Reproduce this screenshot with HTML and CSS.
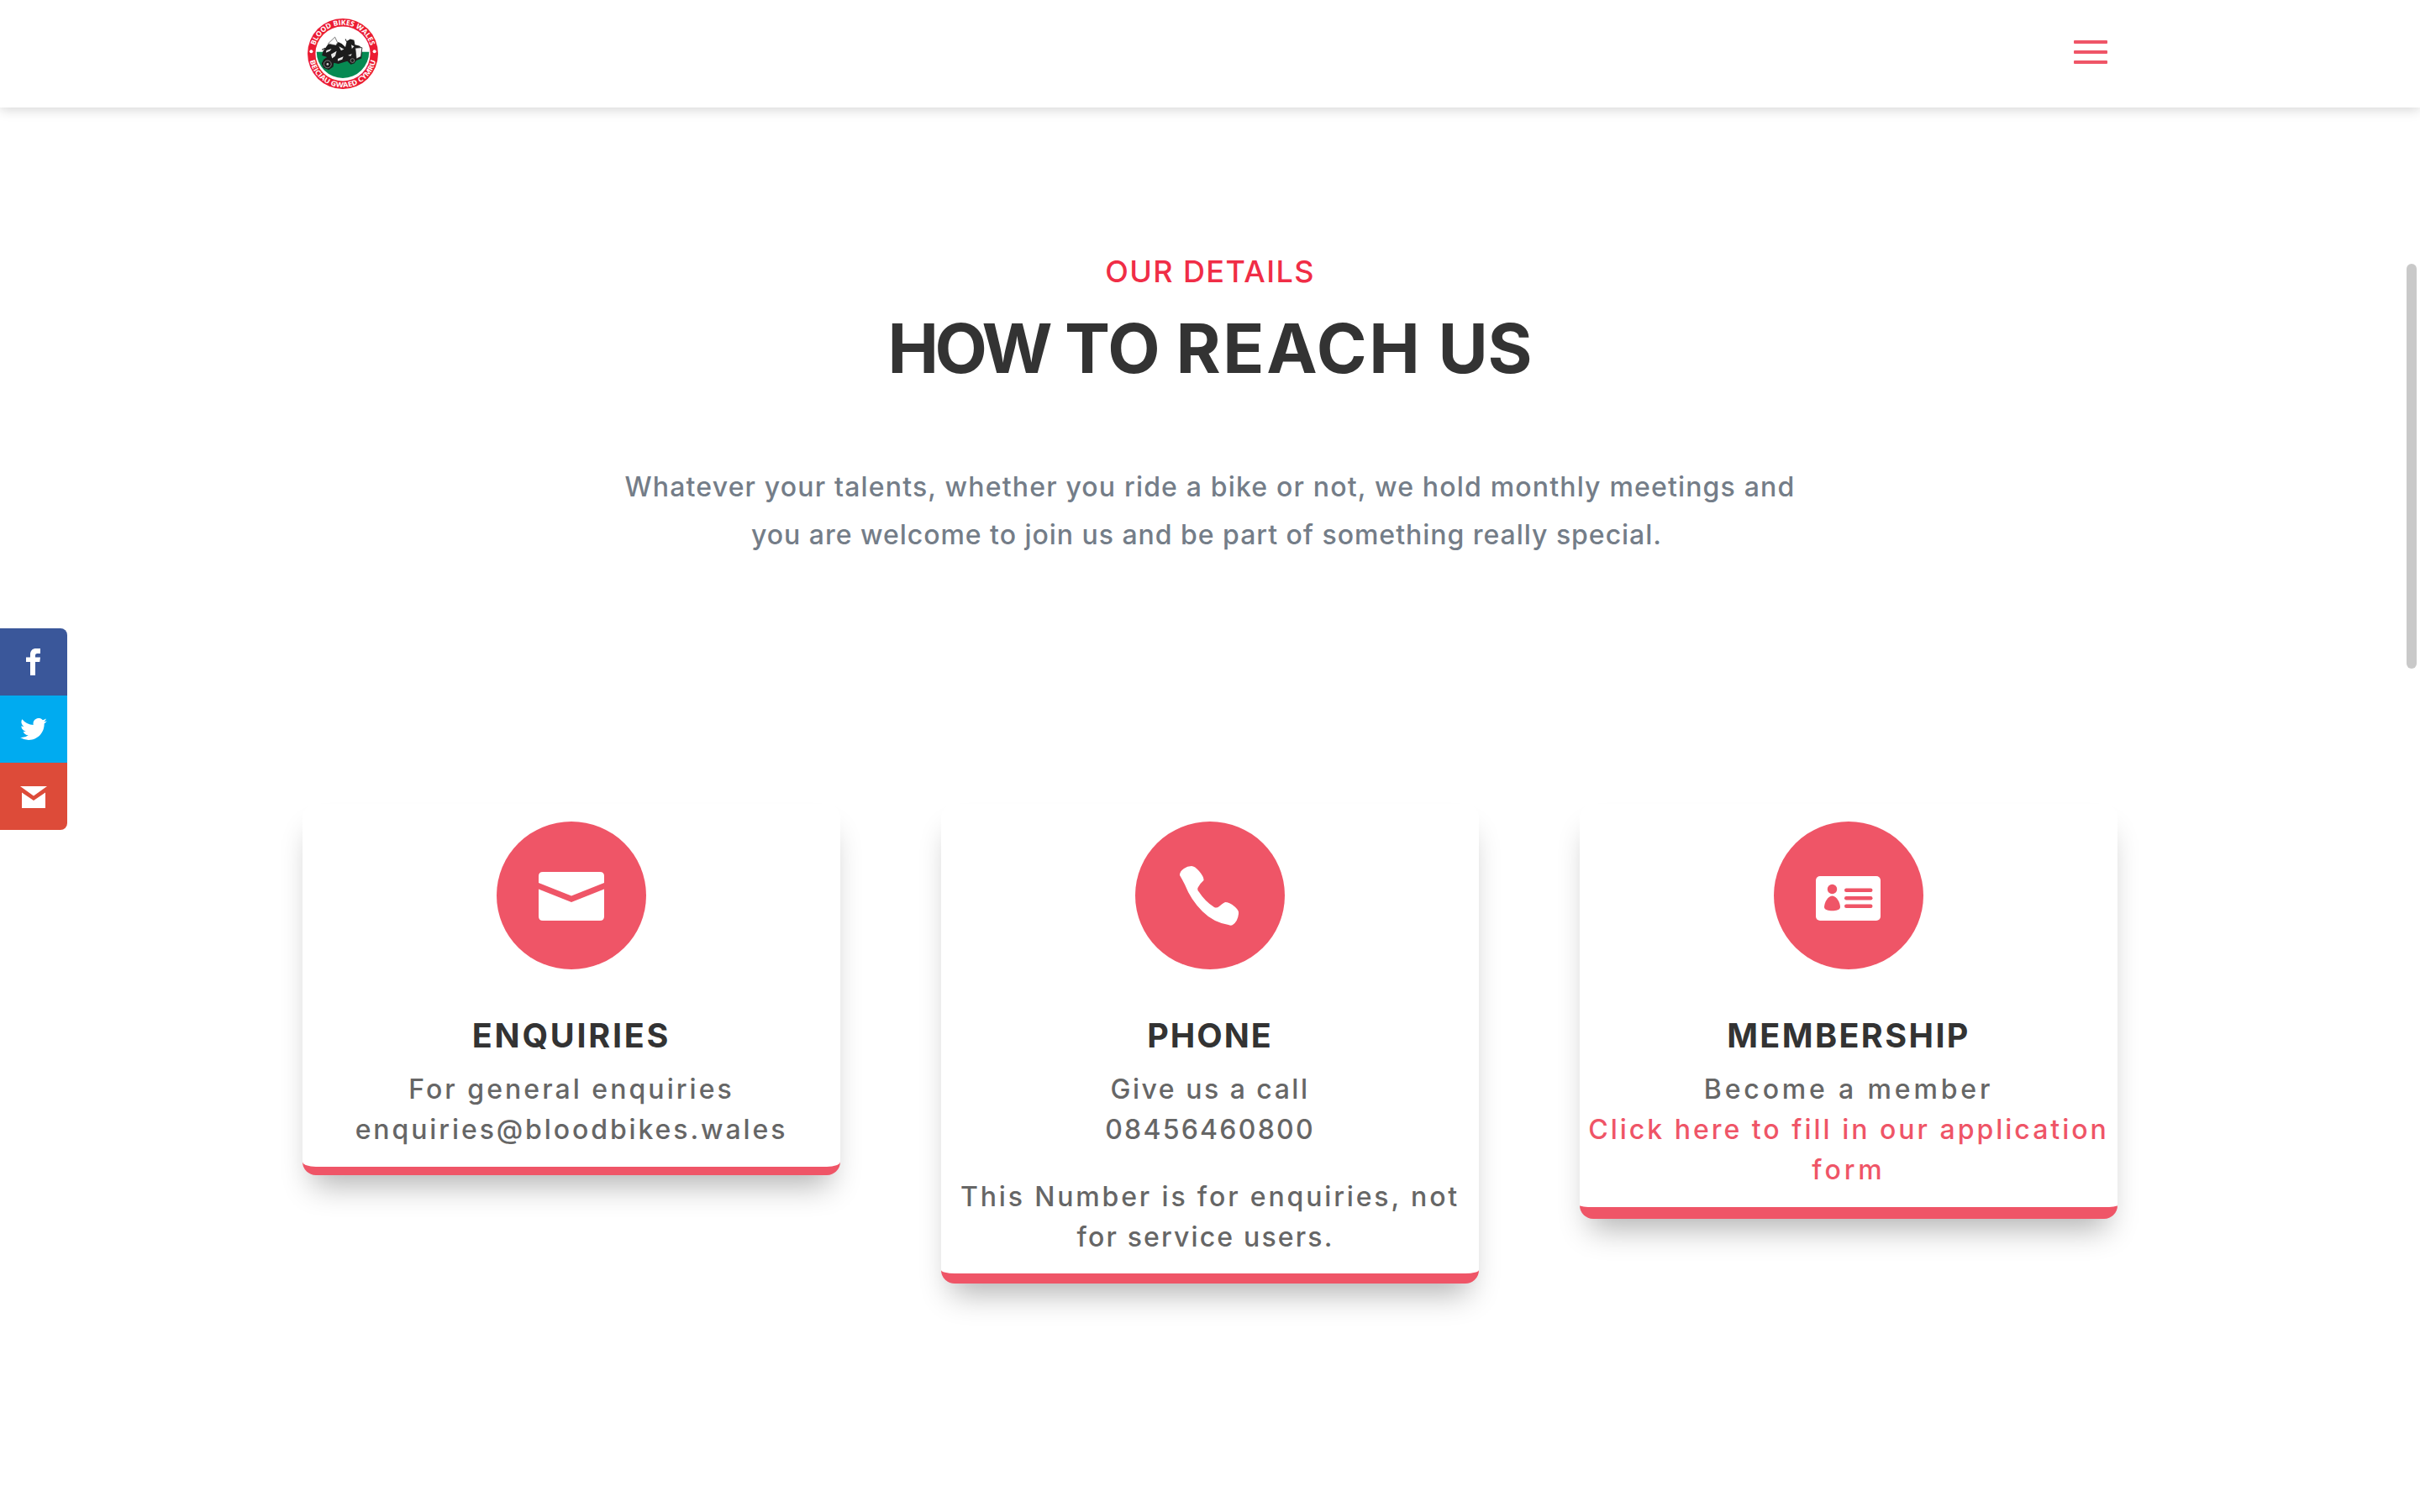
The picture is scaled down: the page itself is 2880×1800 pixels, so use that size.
FILE: index.html
```html
<!DOCTYPE html>
<html lang="en">
<head>
<meta charset="utf-8">
<title>Blood Bikes Wales</title>
<link rel="stylesheet" href="styles.css">
</head>
<body>
<header class="navbar">
  <a class="logo" href="#" aria-label="Blood Bikes Wales">
    <svg viewBox="49 35 250 250" width="84" height="84">
      <defs>
        <path id="arc-top" d="M72 160A102 102 0 0 1 276 160"/>
        <path id="arc-bottom" d="M55 160A119 119 0 0 0 293 160"/>
      </defs>
      <circle cx="174" cy="160" r="125" fill="#eb1c33"/>
      <circle cx="174" cy="160" r="97" fill="#fff"/>
      <path d="M81 153H267A93 93 0 0 1 81 153Z" fill="#068a52"/>
      <g class="logo-text">
        <text><textPath href="#arc-top" startOffset="29" textLength="262" lengthAdjust="spacingAndGlyphs">BLOOD BIKES WALES</textPath></text>
        <text><textPath href="#arc-bottom" startOffset="25" textLength="324" lengthAdjust="spacingAndGlyphs">BEICIAU GWAED CYMRU</textPath></text>
      </g>
      <circle cx="62" cy="152" r="6" fill="#fff"/>
      <circle cx="286" cy="152" r="6" fill="#fff"/>
      <path d="M122 124L146 101L155 120L150 131Z" fill="#fff" stroke="#333" stroke-width="2"/>
      <path d="M112 140L122 126L150 130L158 118L170 124L183 136L188 115L200 108L214 112L217 128L232 132L243 140L240 176L222 184L214 194L202 198L190 186L158 196L142 192L140 206L124 217L106 210L99 194L106 180L118 172L100 166L104 150Z" fill="#1c1c1c"/>
      <path d="M218 140L242 138L238 170L222 178Z" fill="#f2f2f2" stroke="#222" stroke-width="2"/>
      <path d="M116 148L134 142L128 150L114 156ZM132 162L152 150L147 168L136 176ZM160 134L178 144L168 149ZM192 166L206 160L202 168ZM156 178L176 170L172 180L156 186ZM204 128L214 134L206 142Z" fill="#e8e8e8"/>
      <circle cx="120" cy="197" r="13" fill="none" stroke="#aaa" stroke-width="2"/>
      <circle cx="120" cy="197" r="4" fill="#ccc"/>
      <circle cx="208" cy="184" r="7" fill="none" stroke="#aaa" stroke-width="2"/>
      <path d="M188 118L183 108M112 140L100 146" stroke="#222" stroke-width="3"/>
    </svg>
  </a>
  <button class="menu" aria-label="Menu"><span></span><span></span><span></span></button>
</header>

<main>
  <section class="intro">
    <p class="eyebrow">OUR DETAILS</p>
    <h1><span class="tight">HOW</span> TO <span class="wide">REACH</span> US</h1>
    <p class="lead"><span>Whatever your talents, whether you ride a bike or not, we hold monthly meetings and</span><span class="lead-end">you are welcome to join us and be part of something really special.</span></p>
  </section>

  <section class="cards">
    <article class="card enquiries">
      <div class="badge">
        <svg viewBox="0 0 78 58" width="78" height="58" fill="#fff"><path d="M5 0H73Q78 0 78 5V13L39 28.500L0 13V5Q0 0 5 0Z"/><path d="M0 20.500L39 36L78 20.500V53Q78 58 73 58H5Q0 58 0 53Z"/></svg>
      </div>
      <h2>ENQUIRIES</h2>
      <p><span class="general">For general enquiries</span><span class="email">enquiries@bloodbikes.wales</span></p>
    </article>
    <article class="card phone">
      <div class="badge">
        <svg viewBox="0 0 70 71" width="70" height="71" fill="#fff"><path d="M14 0Q18 0 23 6Q29 13 28.500 17Q24 21 22 25Q20 28 23 31Q30 42 41 49Q44 50.500 47 48Q50 45 54 43Q59 43 65 48Q71 53 70 57Q69 66 63 70Q61 71.500 58 70Q40 67 27 54Q13 40 6 22Q3 16 0 11Q0 6 5 3Q9 0 14 0Z"/></svg>
      </div>
      <h2>PHONE</h2>
      <p><span class="call">Give us a call</span><span class="number">08456460800</span></p>
      <p><span class="note">This Number is for enquiries, not</span><span class="note-end">for service users.</span></p>
    </article>
    <article class="card membership">
      <div class="badge">
        <svg viewBox="0 0 77 53" width="77" height="53"><rect width="77" height="53" rx="5" fill="#fff"/><g fill="#ef5567"><circle cx="19.500" cy="15.500" r="5.700"/><path d="M19.500 23.500C25 23.500 29 32 29 37C29 40 24 41.200 19.500 41.200S10 40 10 37C10 32 14 23.500 19.500 23.500Z"/><rect x="34" y="14.500" width="33.500" height="4.500" rx="2.200"/><rect x="34" y="24" width="33.500" height="4.500" rx="2.200"/><rect x="34" y="33.500" width="33.500" height="4.500" rx="2.200"/></g></svg>
      </div>
      <h2>MEMBERSHIP</h2>
      <p><span class="become">Become a member</span><a href="#"><span class="apply">Click here to fill in our application</span><span class="apply-end">form</span></a></p>
    </article>
  </section>
</main>

<nav class="social" aria-label="Share">
  <a class="facebook" href="#" aria-label="Facebook"><svg viewBox="0 0 18 32" width="18" height="32" fill="#fff"><path d="M5 32V16H0V10.500H5V7.500C5 2.500 7.500 0 12 0H17V6H13.500C11.500 6 11 7 11 8.500V10.500H17L16.300 16H11V32Z"/></svg></a>
  <a class="twitter" href="#" aria-label="Twitter"><svg viewBox="0 0 24 20" width="32" height="26.500" fill="#fff"><path d="M24 2.370a9.800 9.800 0 0 1-2.830.780A4.940 4.940 0 0 0 23.340.420a9.860 9.860 0 0 1-3.130 1.200 4.920 4.920 0 0 0-8.390 4.490A13.980 13.980 0 0 1 1.670.960a4.930 4.930 0 0 0 1.520 6.570 4.900 4.900 0 0 1-2.230-.610c-.050 2.280 1.580 4.410 3.950 4.890a4.930 4.930 0 0 1-2.220.080 4.930 4.930 0 0 0 4.600 3.420A9.900 9.900 0 0 1 0 17.350a13.940 13.940 0 0 0 7.550 2.210c9.140 0 14.310-7.720 13.990-14.640A10 10 0 0 0 24 2.370Z"/></svg></a>
  <a class="gmail" href="#" aria-label="Email"><svg viewBox="0 0 32 26" width="32" height="26" fill="#fff"><path d="M0 0H32L16 11.500ZM2 7.500L16 17L30 7.500V26H2Z"/></svg></a>
</nav>
<div class="scroll-thumb"></div>
</body>
</html>
```
FILE: styles.css
```css
* { box-sizing: border-box; }
body { margin: 0; height: 1800px; overflow: hidden; background: #fff; color: #666; font: 500 32px/48px Inter, "Liberation Sans", sans-serif; text-align: center; }
h1, h2, p { margin: 0; }
a { color: inherit; text-decoration: none; }
svg { display: block; }
p span, .menu span { display: block; white-space: nowrap; }

.navbar { height: 128px; padding: 0 372px 0 366px; display: flex; justify-content: space-between; align-items: center; background: #fff; box-shadow: 0 2px 14px rgba(0, 0, 0, .18); }
.logo-text { fill: #fff; font: 700 25px "Open Sans", sans-serif; }
.menu { width: 40px; padding: 0; margin-bottom: 4px; border: 0; background: none; display: grid; gap: 8px; }
.menu span { height: 4px; border-radius: 1px; background: #ef5567; }

.intro { padding-top: 171px; }
.eyebrow { color: #f02d46; font-size: 36px; letter-spacing: 1.4px; }
h1 { margin-top: 26px; color: #333; font-size: 81px; line-height: 84px; font-weight: 700; letter-spacing: -.19px; }
h1 .tight { letter-spacing: -4.5px; }
h1 .wide { letter-spacing: 2.6px; }
.lead { margin-top: 94px; color: #747d88; line-height: 57px; letter-spacing: 1.17px; }
.lead-end { letter-spacing: .97px; position: relative; left: -4px; }

.cards { width: 2160px; margin: 292px auto 0; display: grid; grid-template-columns: repeat(3, 640px); justify-content: space-between; align-items: start; }
.card { padding: 21px 0 20px; background: #fff; border-radius: 16px; border-bottom: 10px solid #ef5567; box-shadow: 0 24px 36px -12px rgba(0, 0, 0, .3); }
.phone { padding-bottom: 19px; border-bottom-width: 12.5px; }
.membership { border-bottom-width: 14px; }
.badge { width: 178px; height: 176px; margin: 0 auto 59px; border-radius: 50%; background: #ef5567; display: grid; place-items: center; }
.enquiries .badge { padding-top: 2px; }
.membership .badge { padding: 6px 2px 0 0; }
.phone .badge { padding: 1px 3px 0 0; }
h2 { margin-bottom: 20px; color: #333; font-size: 39.5px; line-height: 40px; font-weight: 700; letter-spacing: 2.75px; }
.phone h2 { letter-spacing: 2px; }
.membership h2 { letter-spacing: 2.4px; }
.card p + p { margin-top: 32px; }
.card a { color: #ef5567; }

/* tracking per line */
.general { letter-spacing: 3.05px; }
.email { letter-spacing: 2.9px; }
.call { letter-spacing: 2.5px; }
.number { letter-spacing: 2.25px; }
.note { letter-spacing: 2.85px; }
.note-end { letter-spacing: 2.15px; margin-right: 11px; }
.become { letter-spacing: 3.85px; }
.apply { letter-spacing: 3px; }
.apply-end { letter-spacing: 3.9px; }

.social { position: fixed; left: 0; top: 748px; width: 80px; border-radius: 0 8px 8px 0; overflow: hidden; }
.social a { height: 80px; display: grid; place-items: center; }
.facebook { background: #3a579a; }
.twitter { background: #00abf0; }
.gmail { background: #dd4b39; padding-top: 2px; }
.scroll-thumb { position: fixed; right: 4px; top: 314px; width: 12px; height: 482px; border-radius: 6px; background: #c9c9c9; }
```
